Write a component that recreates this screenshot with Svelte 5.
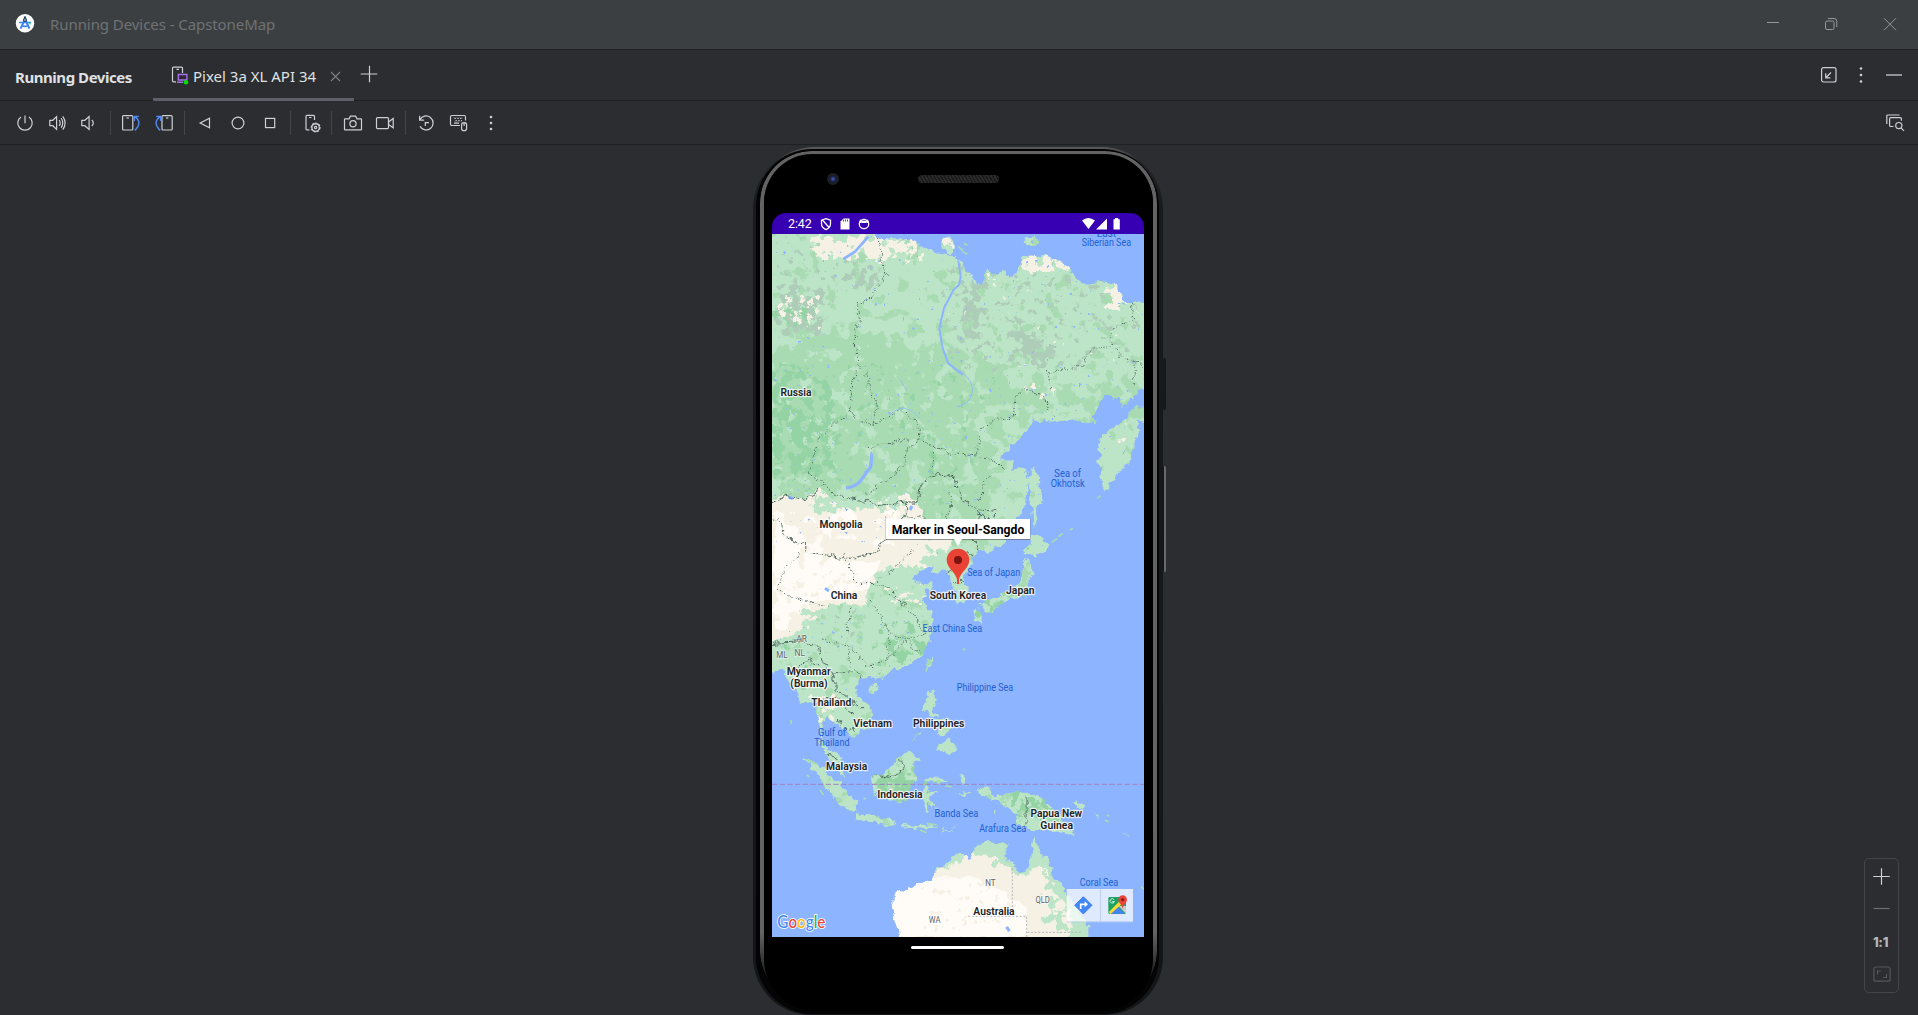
<script>
  const noise = [
    { id: 'mid', color: '#a9dbb3', freq: 0.024, seed: 3, blur: 34 },
    { id: 'deep', color: '#94d4a4', freq: 0.032, seed: 9, blur: 30 },
    { id: 'cream', color: '#f6f1e5', freq: 0.045, seed: 5, blur: 14 },
    { id: 'white', color: '#fffcf7', freq: 0.02, seed: 12, blur: 14 },
    { id: 'gray', color: '#aecdb8', freq: 0.04, seed: 21, blur: 16 },
    { id: 'pale', color: '#bce4c6', freq: 0.04, seed: 31, blur: 16 },
    { id: 'lake', color: '#8cb4ff', freq: 0.07, seed: 44, blur: 14 }
  ];

  // country labels: text, centre x, baseline y, width
  const countries = [
    ['Russia', 168, 768, 93], ['Mongolia', 303, 1164, 129], ['China', 312, 1377, 80],
    ['South Korea', 654, 1377, 169], ['Japan', 841, 1362, 86], ['Myanmar', 206, 1605, 132],
    ['(Burma)', 207, 1641, 112], ['Thailand', 274, 1699, 120], ['Vietnam', 398, 1760, 116],
    ['Philippines', 596, 1761, 154], ['Malaysia', 320, 1889, 124], ['Indonesia', 480, 1974, 136],
    ['Papua New', 949, 2031, 155], ['Guinea', 950, 2067, 98], ['Australia', 762, 2325, 124]
  ];
  const seas = [
    ['East', 1099, 291, 58], ['Siberian Sea', 1099, 319, 148], ['Sea of', 983, 1011, 80],
    ['Okhotsk', 983, 1041, 102], ['Sea of Japan', 761, 1307, 159], ['East China Sea', 637, 1476, 179],
    ['Philippine Sea', 735, 1653, 169], ['Gulf of', 276, 1787, 84], ['Thailand', 276, 1817, 106],
    ['Banda Sea', 649, 2030, 131], ['Arafura Sea', 788, 2076, 141], ['Coral Sea', 1077, 2237, 116]
  ];
  const regions = [
    ['AR', 185, 1506, 32], ['ML', 126, 1553, 34], ['NL', 179, 1547, 31],
    ['NT', 751, 2238, 31], ['QLD', 908, 2289, 43], ['WA', 584, 2348, 35]
  ];
</script>

<div class="window">
  <header class="titlebar">
    <svg class="logo" width="20" height="20" viewBox="0 0 20 20">
      <circle cx="10" cy="9.2" r="9.2" fill="#fff" />
      <path d="M10 2.400v2" stroke="#2b4a6b" stroke-width="2.200" />
      <path d="M10 5 L5.600 14.600 M10 5 L14.400 14.600" stroke="#3b82f6" stroke-width="2" fill="none" />
      <path d="M4 8.500h12M6.500 11.600 q3.500 1.600 7 0" stroke="#4285f4" stroke-width="1.600" fill="none" />
      <circle cx="10" cy="6" r="2" fill="#1f3b5c" /><circle cx="10" cy="6" r=".8" fill="#fff" />
      <path d="M13.500 8.600l2 1.600" stroke="#3ddc84" stroke-width="1.400" />
    </svg>
    <span class="title">Running Devices - CapstoneMap</span>
    <div class="wincontrols">
      <svg width="14" height="14" viewBox="0 0 14 14"><path d="M1 5.500h12" /></svg>
      <svg width="14" height="14" viewBox="0 0 14 14"><rect x=".5" y="4" width="8.500" height="8.500" rx="1.500" /><path d="M3 1.500h6a2.800 2.800 0 0 1 2.800 2.800V10" /></svg>
      <svg width="14" height="14" viewBox="0 0 14 14"><path d="M1 1.200l12 12M13 1.200l-12 12" /></svg>
    </div>
  </header>

  <nav class="tabs">
    <strong>Running Devices</strong>
    <div class="tab">
      <svg class="device" width="18" height="20" viewBox="0 0 18 20">
        <path d="M11.500 7V2.200a1 1 0 0 0-1-1H2.500a1 1 0 0 0-1 1v12.600a1 1 0 0 0 1 1H5M5.500 3.300h2.500" stroke="#ced0d6" fill="none" stroke-width="1.200" />
        <path d="M7.300 8.500h8.600v5.500H7.300zM6 16.300h6" stroke="#a571e6" fill="#2f2936" stroke-width="1.400" />
        <circle cx="15" cy="16.300" r="2.300" fill="#00e000" />
      </svg>
      <span>Pixel 3a XL API 34</span>
      <svg class="close" width="11" height="11" viewBox="0 0 11 11"><path d="M1 1l9 9M10 1l-9 9" stroke="#7d8085" stroke-width="1.100" /></svg>
    </div>
    <svg class="add" width="18" height="18" viewBox="0 0 18 18"><path d="M9.500 .7v16.600M.7 9h16.600" stroke="#ced0d6" stroke-width="1.200" /></svg>
    <div class="tabtools">
      <svg width="18" height="18" viewBox="0 0 18 18"><rect x="1.600" y="1.600" width="14.400" height="14.400" rx="2" /><path d="M11 6.500L6 11.500M5.700 7.300v4.600h4.600" /></svg>
      <svg width="4" height="18" viewBox="0 0 4 18" class="dots"><circle cx="2" cy="2.500" r="1.300" /><circle cx="2" cy="9" r="1.300" /><circle cx="2" cy="15.500" r="1.300" /></svg>
      <svg width="18" height="18" viewBox="0 0 18 18"><path d="M2 9h16" stroke-width="1.800" stroke="#9da0a5" /></svg>
    </div>
  </nav>

  <div class="toolbar">
    <svg width="18" height="18" viewBox="0 0 18 18"><path d="M9 1.500v7.800M5 3a7.200 7.200 0 1 0 8 0" /></svg>
    <svg class="g1" width="20" height="18" viewBox="0 0 20 18"><path d="M1.800 6.300h3L8.600 2.600v12.800L4.800 11.700h-3zM11.200 6q2 3 0 6M13.200 4.300q3 4.700 0 9.400M14.800 2.300q4.600 6.700 0 13.400" /></svg>
    <svg class="g2" width="16" height="18" viewBox="0 0 16 18"><path d="M1.800 6.300h3L9.100 2.600v12.800L4.800 11.700h-3zM11.800 6q3 3 0 6" /></svg>
    <i class="sep s1"></i>
    <svg class="g3" width="20" height="18" viewBox="0 0 20 18"><rect x="1.600" y="1.600" width="10.200" height="14.400" rx="1" /><path d="M5.500 4h2.400" /><path class="blue" d="M13.200 2.500h4.500M13.400 2v5M13.600 2.600q8.500 5.400 .2 14" /></svg>
    <svg class="g4" width="20" height="18" viewBox="0 0 20 18"><rect x="8" y="1.600" width="10.200" height="14.400" rx="1" /><path d="M12 4h2.400" /><path class="blue" d="M6.800 2.500H2.300M6.600 2v5M6.400 2.600q-8.500 5.400-.2 14" /></svg>
    <i class="sep s2"></i>
    <svg class="g5" width="14" height="18" viewBox="0 0 14 18"><path d="M11.500 4.300v9.400L2.200 9z" /></svg>
    <svg class="g6" width="16" height="18" viewBox="0 0 16 18"><circle cx="8" cy="9" r="5.900" /></svg>
    <svg class="g7" width="14" height="18" viewBox="0 0 14 18"><rect x="2.500" y="4.400" width="9.200" height="9.200" /></svg>
    <i class="sep s3"></i>
    <svg class="g8" width="18" height="20" viewBox="0 0 18 20"><path d="M10.500 7V3.300a1 1 0 0 0-1-1H3a1 1 0 0 0-1 1v12.600a1 1 0 0 0 1 1h2.500M5 4.500h2.500" /><circle cx="11.600" cy="14.500" r="4.400" stroke-dasharray="2.400 .9" /><circle cx="11.600" cy="14.500" r="3.700" /><circle cx="11.600" cy="14.500" r="1.200" /></svg>
    <i class="sep s4"></i>
    <svg class="g9" width="20" height="18" viewBox="0 0 20 18"><path d="M2 4.800h4L7.400 2.200h5.200L14 4.800h4q.5 0 .5.6v9.800q0 .6-.6.6H2.100q-.6 0-.6-.6V5.400q0-.6.5-.6z" /><circle cx="10" cy="9.800" r="3.100" /></svg>
    <svg class="g10" width="20" height="18" viewBox="0 0 20 18"><rect x="1.500" y="3.600" width="12" height="11" rx="1" /><path d="M13.500 8l4.700-3.600v9.400L13.500 10.400z" /></svg>
    <i class="sep s5"></i>
    <svg class="g11" width="18" height="18" viewBox="0 0 18 18"><path d="M2.600 1.700v4.400h4.600M2.800 5.900A7 7 0 1 1 3 12.400M8.300 12V8.600h3.700" /></svg>
    <svg class="g12" width="20" height="20" viewBox="0 0 20 20"><path d="M11 12.500H3a1.500 1.500 0 0 1-1.500-1.500V4A1.500 1.500 0 0 1 3 2.500h12A1.500 1.500 0 0 1 16.500 4v3.500M4 5.300h10M5 7.700h8M5 10.100h5" /><path d="M4 5.300h10.500M5 7.700h8" stroke-dasharray="1.500 1.300" stroke="#2b2d30" /><rect x="12.600" y="9.600" width="5" height="8" rx="2.200" fill="#2b2d30" /><path d="M15.100 9.600v3.400" /></svg>
    <svg class="g13 dots" width="4" height="18" viewBox="0 0 4 18"><circle cx="2" cy="3" r="1.300" /><circle cx="2" cy="9" r="1.300" /><circle cx="2" cy="15" r="1.300" /></svg>
    <svg class="g14" width="20" height="20" viewBox="0 0 20 20"><path d="M1.800 11V3a1 1 0 0 1 1-1H14.500M8.500 13.500H5.600a1 1 0 0 1-1-1V5.700a1 1 0 0 1 1-1h9.800a1 1 0 0 1 1 1v2" /><circle cx="13.800" cy="12.600" r="3.100" /><path d="M16 14.800l3 3" /></svg>
  </div>

  <main class="stage">
    <div class="phone">
      <i class="key power"></i>
      <i class="key volume"></i>
      <div class="rim"></div>
      <div class="bezel"></div>
      <div class="face">
        <div class="sensors"><i class="camera"></i><i class="speaker"></i></div>
        <div class="screen">
          <div class="status">
            <span>2:42</span>
            <svg width="83" height="14" viewBox="0 0 83 14">
              <path d="M6 1.600l4.500 1.600v3.600q0 4-4.500 5.800-4.500-1.800-4.500-5.800V3.200zM2.500 3l7 8" fill="none" stroke="#fff" stroke-width="1.300" />
              <path d="M23.500 1.500h6v11h-9V4.500z" fill="#fff" /><path d="M23.500 2.500v2M25.500 2.500v2M27.500 2.500v2" stroke="#3700b3" stroke-width=".8" />
              <circle cx="44" cy="7" r="4.700" fill="none" stroke="#fff" stroke-width="1.300" /><path d="M40 2.500q4 2.500 8 0l1 3.500h-10z" fill="#fff" /><path d="M41.500 6l1.500 1M46.500 6L45 7" stroke="#3700b3" />
            </svg>
            <svg class="signal" width="40" height="14" viewBox="0 0 40 14">
              <path d="M1 3.500q6-5 13 0L7.500 12zM15 12.500L26 1.500v11zM32.500 2.200h1.600V1h3v1.200h1.700v10.300H32.500z" fill="#fff" />
            </svg>
          </div>
          <svg class="map" width="372" height="703" viewBox="96 282 1116 2109">
            <defs>
              <filter id="rough" filterUnits="userSpaceOnUse" x="60" y="250" width="1190" height="2180">
                <feTurbulence type="fractalNoise" baseFrequency=".045" numOctaves="3" seed="4" />
                <feDisplacementMap in="SourceGraphic" scale="26" xChannelSelector="R" yChannelSelector="G" />
              </filter>
              {#each noise as n}
                <filter id={n.id} filterUnits="userSpaceOnUse" x="60" y="250" width="1190" height="2180" color-interpolation-filters="sRGB">
                  <feTurbulence type="fractalNoise" baseFrequency={n.freq} numOctaves="5" seed={n.seed} />
                  <feColorMatrix values="0 0 0 0 0  0 0 0 0 0  0 0 0 0 0  1 0 0 0 0" result="n" />
                  <feGaussianBlur in="SourceAlpha" stdDeviation={n.blur} result="b" />
                  <feComposite in="n" in2="b" operator="arithmetic" k2="1" k3=".7" k4="-.3" />
                  <feComponentTransfer result="t"><feFuncA type="linear" slope="18" intercept="-11.7" /></feComponentTransfer>
                  <feFlood flood-color={n.color} />
                  <feComposite operator="in" in2="t" />
                </filter>
              {/each}
              <g id="land">
                <path d="M60 250H400L410 290 460 298 520 298 540 318 600 338 640 350 655 362 690 400 715 437 728 430 738 385 755 405 790 397 815 410 830 405 845 350 870 343 920 350 960 365 985 380 1005 410 1030 432 1100 424 1130 440 1145 475 1165 492 1200 482 1250 484V740L1190 750 1180 775 1150 800 1140 775 1100 767 1085 780 1055 830 1068 845 1040 850 1000 838 950 845 885 842 860 870 830 905 780 960 815 958 815 990 850 980 865 1000 870 1020 858 1060 855 1100 835 1130 800 1190 780 1220 745 1235 720 1230 710 1240 690 1250 695 1275 672 1300 680 1350 685 1380 650 1395 650 1350 625 1330 637 1300 600 1292 575 1300 580 1275 545 1290 520 1315 530 1330 585 1335 560 1350 545 1375 565 1410 580 1430 578 1470 570 1500 545 1545 500 1580 455 1590 440 1605 405 1620 390 1610 360 1615 345 1640 355 1670 385 1695 395 1720 385 1760 355 1785 335 1800 325 1775 300 1755 285 1750 270 1735 255 1730 245 1760 245 1800 265 1830 290 1840 310 1870 320 1910 300 1900 270 1865 258 1840 240 1810 238 1750 230 1690 200 1685 180 1695 175 1660 150 1630 135 1600 120 1590 60 1605Z" />
                <path d="M605 295L625 290 645 318 632 345 608 325ZM850 305L880 285 897 318 870 318Z" />
                <path d="M1250 790L1180 805 1150 840 1120 860 1085 890 1077 940 1080 990 1092 1058 1110 1035 1140 990 1170 960 1175 930 1187 925 1180 905 1195 870 1190 840 1250 855Z" />
                <path d="M880 975L892 1000 897 1040 908 1090 887 1100 893 1150 878 1160 872 1090 867 1020ZM873 1180L926 1212 920 1235 885 1248 850 1238 868 1210ZM852 1250L872 1262 874 1300 862 1340 852 1370 800 1382 760 1412 718 1400 740 1380 780 1368 810 1350 837 1330 852 1290Z" />
                <path d="M700 1406L725 1410 720 1448 702 1440ZM738 1408L768 1400 750 1422ZM560 1560L580 1550 573 1585 560 1598ZM385 1640L403 1626 420 1635 405 1658 390 1656Z" />
                <path d="M562 1656L585 1658 583 1690 575 1715 605 1730 570 1727 552 1710ZM585 1745L625 1735 635 1770 600 1790ZM590 1820L630 1790 648 1815 632 1848 600 1832ZM516 1805L545 1770 540 1785Z" />
                <path d="M190 1850L232 1870 265 1905 302 1935 325 1965 348 1980 346 2012 318 2005 280 1970 250 1930ZM345 2020L400 2028 450 2035 475 2052 440 2056 345 2035ZM480 2054L535 2058 590 2056 560 2066 480 2062ZM606 2080L655 2058 615 2072Z" />
                <path d="M508 1830L540 1860 517 1870 532 1910 512 1945 500 1980 450 1985 400 1955 392 1905 422 1908 470 1862ZM550 1930L565 1915 630 1917 600 1930 565 1930 560 1950 590 1960 570 1970 590 2010 570 1990 560 2015 548 1975ZM665 1900L675 1900 675 1935 663 1930Z" />
                <path d="M708 1945L745 1938 760 1972 800 1960 835 1955 905 1972 932 2000 960 2030 1003 2087 940 2072 880 2070 840 2060 822 2020 790 1995 735 1970ZM995 1985L1035 1995 1020 2005ZM1065 2015L1080 2035 1070 2030ZM1150 2070L1170 2090 1160 2085ZM640 1955L700 1960 680 1965ZM762 2015L770 2010 765 2035Z" />
                <path d="M880 2092L897 2125 905 2145 922 2155 935 2205 965 2235 985 2270 1020 2310 1045 2355 1045 2420H480L470 2360 457 2320 458 2270 500 2245 575 2220 588 2185 610 2185 635 2150 665 2140 690 2160 710 2115 735 2105 800 2112 795 2150 820 2175 840 2195 865 2190 870 2160Z" />
              </g>
              <mask id="landmask" maskUnits="userSpaceOnUse" x="96" y="282" width="1116" height="2109">
                <use href="#land" fill="#fff" filter="url(#rough)" />
              </mask>
            </defs>
            <rect x="96" y="282" width="1116" height="2109" fill="#8cb4ff" />
            <g mask="url(#landmask)">
              <rect x="96" y="282" width="1116" height="2109" fill="#bce4c6" />
              <g filter="url(#mid)">
                <path d="M60 610L400 560 640 640 820 700 1000 740 1250 700V850H850L700 1250H60Z" fill-opacity=".82" />
                <path d="M60 250H1250V720H60ZM60 1300H600V2420H60ZM600 1700H1250V2100H600ZM1060 800H1250V1100H1060ZM700 1000H940V1460H700Z" fill-opacity=".48" />
              </g>
              <g filter="url(#deep)">
                <path d="M60 680L200 640 280 720 300 900 330 1000 240 1040H60Z" fill-opacity=".72" />
                <path d="M300 640H840L700 1200H560L450 900H300ZM96 1500H240V1700H96Z" fill-opacity=".38" />
                <path d="M780 1950H960V2060H780ZM90 480H240V580H90ZM380 1880H580V2020H380Z" fill-opacity=".8" />
                <path d="M680 1340H900V1480H680ZM850 1180H930V1330H850ZM380 1450H580V1600H380Z" fill-opacity=".65" />
              </g>
              <g filter="url(#gray)">
                <path d="M330 370H430V460H330ZM665 420H715V610H665ZM820 520L870 580 960 640 900 690 830 640ZM96 450H260V600H96Z" fill-opacity=".72" />
                <path d="M600 330H1212V700H600ZM280 1380H380V1500H280ZM96 290H340V480H96Z" fill-opacity=".45" />
              </g>
              <path d="M60 1085L130 1065 190 1080 240 1045 280 1080 400 1095 440 1075 500 1060 550 1105 545 1150 500 1180 560 1200 640 1190 620 1240 560 1270 490 1300 420 1290 380 1350 380 1395 270 1390 240 1425 150 1490 60 1510Z" fill="#f6f1e5" filter="url(#rough)" />
              <g filter="url(#white)">
                <path d="M96 1160L200 1240 400 1270 440 1220 400 1350 220 1390 120 1480H96Z" />
                <path d="M96 1100H480V1230H96Z" fill-opacity=".6" />
              </g>
              <g filter="url(#cream)">
                <path d="M210 282H430V365H210ZM400 295H540V335H400ZM600 282H650V330H600ZM840 340H990V395H840ZM1110 430H1160V520H1110ZM725 400H760V435H725Z" fill-opacity=".88" />
                <path d="M110 460H250V570H110ZM400 330H560V370H400ZM480 1200H640V1300H480ZM420 1330H560V1400H420ZM200 1650H320V1760H200Z" fill-opacity=".6" />
                <path d="M1120 850H1170V930H1120ZM850 710H950V790H850ZM180 1430H230V1500H180ZM96 1290H380V1400H96Z" fill-opacity=".5" />
                <path d="M600 400H1212V700H600Z" fill-opacity=".24" />
              </g>
              <g filter="url(#pale)"><path d="M190 1060H500V1125H190ZM400 1270H530V1370H400ZM170 1400H260V1470H170ZM540 1215H650V1300H540Z" fill-opacity=".85" /></g>
              <path d="M470 2420L440 2300 450 2240 600 2190 680 2150 730 2140 780 2160 830 2205 870 2200 900 2175 930 2210 945 2260 985 2300 1000 2345 970 2420Z" fill="#f6f1e5" filter="url(#rough)" />
              <path d="M440 2391L440 2250 600 2210 700 2210 760 2240 860 2300 860 2391Z" fill="#fffcf7" filter="url(#rough)" />
              <g filter="url(#cream)"><path d="M540 2200H850V2391H540Z" fill-opacity=".45" /></g>
              <g filter="url(#pale)"><path d="M900 2140H1010V2391H900ZM740 2150H800V2200H740Z" fill-opacity=".65" /></g>
              <g filter="url(#lake)"><path d="M96 282H1212V1250H96ZM96 1400H600V1700H96Z" fill-opacity=".25" /></g>
              <g class="lakes">
                <path d="M655 362L662 410 657 435 640 450 612 505 598 565 608 625 625 670 668 704" stroke-width="6" />
                <path d="M658 690Q705 725 696 760T650 800" stroke-width="2.500" />
                <path d="M318 1044Q350 1040 365 1018T392 980L396 940" stroke-width="10" />
                <path d="M310 357L345 335 385 290" stroke-width="8" />
                <path d="M450 825Q490 780 540 835M480 720L500 750" stroke-width="2" />
                <path d="M145 1070l14 6M510 1110l6-12M255 1345l12 8M800 2360l8 14" stroke-width="9" />
              </g>
              <g class="borders" filter="url(#rough)">
                <path d="M410 282L425 330 422 370 443 405 430 425 405 450 395 475 350 492 358 540 345 600 350 650 358 680 335 740 330 810 345 840 400 850 412 800 385 740 380 690" />
                <path d="M400 850L440 840 480 805 530 845 540 900 500 930 490 980 445 1020 380 1060M540 900L620 935 710 945 725 860 770 840 820 830 825 770 860 745 920 780 940 830" />
                <path d="M930 700L960 690 1030 680 1035 650 1060 625 1110 620 1120 560 1180 540 1178 490M1120 620L1150 655 1212 672M1185 670L1180 730M930 760L925 690" />
                <path d="M330 810L240 890 205 990 220 1015 250 1025M390 920L480 905 510 900M580 1000L580 930M715 950L770 965 790 985M720 1080L735 1020 760 1005M630 1060L635 1100 600 1170M490 1130L560 1135 600 1170" />
                <path d="M180 1240L130 1290 115 1350 150 1370 270 1400M310 1240L350 1330 400 1330 480 1270 520 1230M390 1380L450 1480 440 1560M330 1400L320 1500 330 1580M450 1360L500 1400 560 1480 500 1500 440 1480M390 1330L460 1350 490 1400M250 1500L330 1520 380 1580 440 1560 500 1500 540 1540" />
              </g>
              <path class="states" d="M817 2185V2310M685 2329H860V2391M862 2377H1025" />
              <g class="nations" filter="url(#rough)">
                <path d="M96 1085L140 1065 190 1082 225 1065 245 1030 290 1068 370 1082 430 1100 480 1088 530 1085 545 1030 590 1000 640 1010 665 1080 710 1105 765 1115 760 1140 710 1125" />
                <path d="M96 1130L125 1150 130 1190 190 1210 205 1235 330 1258 410 1235 440 1190 490 1130 505 1085M715 1105L720 1130 700 1200 720 1230M700 1240L650 1250 620 1310M640 1325L680 1325" />
                <path d="M96 1510L190 1505 235 1520 245 1560 275 1600 285 1640 330 1680 370 1710M240 1580L205 1560 150 1600M275 1600L350 1590 370 1620M230 1690L290 1670 340 1730M295 1740L310 1770 340 1765M400 1905L450 1912 490 1890 485 1860M858 1970V2060M260 1840L290 1855" />
              </g>
            </g>
            <g class="specks">
              <path d="M935 1207l16-12M955 1190l14-10M990 1170l8-6M1072 1075l10-8M668 1528l8 0M152 1740l2 12M560 2050l30 5M540 2070l20 8M1100 2025l8 4M1095 2040l10 6M200 1905l8 6M240 1950l10 14M370 1975l8 2M615 1938l20 2M655 1330l8 0M655 320l14 12M668 335l14 8M672 310l10 6M1203 2240l9 8" />
            </g>
            <path d="M96 1933H1212" stroke="#a184bd" stroke-width="3" stroke-dasharray="16 7" />
            <g class="sea">{#each seas as [t, x, y, w]}<text {x} {y} textLength={w} lengthAdjust="spacingAndGlyphs">{t}</text>{/each}</g>
            <g class="region">{#each regions as [t, x, y, w]}<text {x} {y} textLength={w} lengthAdjust="spacingAndGlyphs">{t}</text>{/each}</g>
            <g class="country">{#each countries as [t, x, y, w]}<text {x} {y} textLength={w} lengthAdjust="spacingAndGlyphs">{t}</text>{/each}</g>

            <g class="callout">
              <path d="M437 1139H871V1200H437Z" fill="#555" opacity=".6" />
              <path d="M438 1137H870V1197H666L654 1218 642 1197H438Z" fill="#fff" />
              <text x="654" y="1181" textLength="398" lengthAdjust="spacingAndGlyphs">Marker in Seoul-Sangdo</text>
            </g>
            <path d="M651 1332V1318C646 1296 620 1284 620 1260A34 34 0 0 1 688 1260C688 1284 662 1296 657 1318V1332Z" fill="#ea4335" />
            <circle cx="654" cy="1260" r="12" fill="#7b1410" />

            <g class="google">
              <text x="112" y="2363" textLength="144" lengthAdjust="spacingAndGlyphs"><tspan fill="#4285f4">G</tspan><tspan fill="#ea4335">o</tspan><tspan fill="#fbbc04">o</tspan><tspan fill="#4285f4">g</tspan><tspan fill="#34a853">l</tspan><tspan fill="#ea4335">e</tspan></text>
            </g>
            <rect x="980" y="2247" width="199" height="98" fill="#fff" fill-opacity=".72" />
            <path d="M1081.500 2247V2345M980 2346H1179" stroke="#b9c9e6" stroke-width="2.500" />
            <path d="M1030 2270L1056 2296 1030 2322 1004 2296Z" fill="#4285f4" stroke="#4285f4" stroke-width="3" stroke-linejoin="round" />
            <path d="M1022 2307V2293H1036" fill="none" stroke="#fff" stroke-width="5" /><path d="M1034 2284L1044 2293 1034 2302Z" fill="#fff" />
            <rect x="1105" y="2271" width="53" height="51" rx="4" fill="#1ea362" />
            <path d="M1158 2298V2322L1136 2298Z" fill="#c9ccd0" /><path d="M1106 2321L1131 2297 1154 2322Z" fill="#4285f4" />
            <path d="M1106 2317L1148 2274 1156 2282 1112 2322Z" fill="#fdd835" />
            <path d="M1122 2279a6.500 6.500 0 1 0 1 5.500h-6" fill="none" stroke="#fff" stroke-width="2.500" />
            <path d="M1148 2308C1147 2292 1135 2290 1135 2279A13 13 0 0 1 1161 2279C1161 2290 1149 2292 1148 2308Z" fill="#e8453c" /><circle cx="1148" cy="2279" r="5" fill="#8c1f18" />
          </svg>
          <div class="navbar"><i></i></div>
        </div>
      </div>
    </div>

    <div class="zoombox">
      <svg width="18" height="18" viewBox="0 0 18 18"><path d="M8.500 .2v16.600M.2 8.500h16.600" stroke="#ced0d6" stroke-width="1.200" /></svg>
      <svg width="18" height="18" viewBox="0 0 18 18"><path d="M.5 7.500h16" stroke="#6c6e72" stroke-width="1.200" /></svg>
      <b>1:1</b>
      <svg width="18" height="18" viewBox="0 0 18 18"><rect x=".9" y="1" width="16.200" height="14.200" rx="2" stroke="#55575b" stroke-width="1.200" fill="none" /><path d="M4.500 8.500V5H8M13.500 8v3.500H10" stroke="#55575b" stroke-width="1.200" fill="none" /></svg>
    </div>
  </main>
</div>

<style>
  :global(body) { margin: 0; background: #2b2d30; overflow: hidden; }
  .window { width: 1918px; height: 1015px; display: flex; flex-direction: column; background: #2b2d30; color: #dfe1e5; font-family: "Noto Sans", "Open Sans", sans-serif; overflow: hidden; }
  svg { display: block; flex: none; }
  .titlebar { box-sizing: border-box; height: 50px; flex: none; display: flex; align-items: center; padding: 0 12px 2px 15px; background: #3c3f41; border-bottom: 1px solid #1e1f22; }
  .title { margin-left: 15px; padding-top: 1px; font-size: 15px; color: #6f7275; letter-spacing: -.07px; }
  .wincontrols { margin-left: auto; display: flex; gap: 44.500px; padding-right: 9px; }
  .wincontrols svg { fill: none; stroke: #95979a; stroke-width: 1; }
  .tabs { box-sizing: border-box; height: 51px; flex: none; display: flex; align-items: center; padding: 0 16px 0 15px; border-bottom: 1px solid #1e1f22; }
  .tabs strong { width: 138px; padding-top: 4px; font-size: 15px; letter-spacing: -.45px; white-space: nowrap; }
  .tab { box-sizing: border-box; width: 201px; height: 51px; display: flex; align-items: center; padding: 2px 0 0 18px; border-bottom: 3px solid #5f606a; border-radius: 1px; font-size: 15px; white-space: nowrap; }
  .tab span { width: 123px; margin-left: 4px; padding-top: 3px; }
  .device { margin-top: 2px; }
  .close { margin: 3px 0 0 14px; }
  .add { margin: 0 0 2px 6px; }
  .tabtools { margin-left: auto; display: flex; gap: 21px; padding-right: 0; }
  .tabtools svg, .toolbar svg { fill: none; stroke: #ced0d6; stroke-width: 1.200; }
  .tabtools .dots, .toolbar .dots { fill: #ced0d6; stroke: none; }
  .toolbar { box-sizing: border-box; height: 44px; flex: none; display: flex; align-items: center; padding: 1px 13px 0 16px; border-bottom: 1px solid #1e1f22; }
  .sep { width: 1px; height: 24px; background: #43454a; flex: none; }
  .toolbar .blue { stroke: #548af7; stroke-width: 1.400; }
  .g1 { margin-left: 14px; } .g2 { margin-left: 12px; }
  .s1 { margin-left: 14px; } .g3 { margin-left: 10px; } .g4 { margin-left: 13px; }
  .s2 { margin-left: 10px; } .g5 { margin-left: 13px; } .g6 { margin-left: 18px; } .g7 { margin-left: 17px; }
  .s3 { margin-left: 13px; } .g8 { margin-left: 13px; } .s4 { margin-left: 9px; } .g9 { margin-left: 11px; }
  .g10 { margin-left: 12px; } .s5 { margin-left: 10px; } .g11 { margin-left: 11px; } .g12 { margin-left: 14px; }
  .g13 { margin-left: 20px; } .g14 { margin-left: auto; }
  .stage { position: relative; flex: 1; display: flex; justify-content: center; padding-top: 2px; border-bottom: 4px solid #2a2329; box-sizing: border-box; }
  .phone { position: relative; width: 410px; height: 868px; box-sizing: border-box; border-radius: 62px 62px 58px 58px; margin-right: 2px; background: linear-gradient(#5c5c5c, #242526 14px, #191a1b 60px, #141516); }
  .rim { position: absolute; inset: 2px 4px 1px 3px; border-radius: 57px; background: #040404; }
  .bezel { position: absolute; inset: 4px 6px 12px 7px; border-radius: 52px; border: 4px solid #636363; border-top-width: 3px; border-bottom-color: transparent; box-sizing: border-box; mask-image: linear-gradient(#000 calc(100% - 70px), transparent calc(100% - 12px)); }
  .face { position: absolute; inset: 8px 10px 4px 11px; border-radius: 48px 48px 52px 52px; background: #000; }
  .sensors { height: 58px; display: flex; align-items: center; padding: 0 0 11px 63px; box-sizing: border-box; }
  .camera { width: 12px; height: 12px; border-radius: 50%; background: radial-gradient(#38509c 12%, #16204a 30%, #1d1e22 50%); }
  .speaker { width: 81px; height: 8px; margin-left: 79px; border-radius: 4px; background: repeating-linear-gradient(60deg, #2b2b2b 0 1.500px, #1b1b1b 1.500px 3px); }
  .screen { width: 372px; margin-left: 8px; border-radius: 14px 14px 0 0; overflow: hidden; }
  .face .screen { margin-left: 8px; }
  .status { height: 21px; box-sizing: border-box; display: flex; align-items: center; padding: 0 23px 0 16px; background: #3700b3; color: #fff; font: 12.500px Roboto, sans-serif; }
  .status span { width: 24px; margin-right: 8px; letter-spacing: -.1px; }
  .signal { margin-left: auto; }
  .navbar { height: 21px; display: flex; justify-content: center; align-items: center; }
  .navbar i { width: 93px; height: 3px; margin-right: 1px; border-radius: 2px; background: #fff; }
  .key { position: absolute; right: -3px; width: 3px; background: #17181a; border-radius: 2px; }
  .power { top: 211px; height: 52px; }
  .volume { top: 319px; height: 106px; background: linear-gradient(90deg, #151515 1px, #6a6a6a 1px); }
  .zoombox { position: absolute; right: 19px; top: 713px; width: 33px; height: 116px; border: 1px solid #43454a; border-radius: 5px; display: flex; flex-direction: column; align-items: center; justify-content: space-between; padding: 9px 0 8px; }
  .zoombox b { font: 800 13px/18px Inter, sans-serif; color: #b4b8bf; letter-spacing: -.3px; margin-right: 2px; }
  .map text { font-family: Roboto, sans-serif; text-anchor: middle; paint-order: stroke; }
  .country text { font-size: 34px; font-weight: 600; fill: #202124; stroke: #fff; stroke-opacity: .8; stroke-width: 7px; stroke-linejoin: round; }
  .sea text { font-size: 32px; fill: #2360cf; }
  .region text { font-size: 27px; fill: #5c6266; stroke: #fff; stroke-opacity: .6; stroke-width: 4px; }
  .callout text { font-size: 36px; font-weight: 700; fill: #000; }
  .google text { font-size: 50px; font-weight: 500; text-anchor: start; stroke: #fff; stroke-width: 5px; font-family: Lato, sans-serif; }
  .lakes { fill: none; stroke: #8cb4ff; }
  .borders { fill: none; stroke: #48665c; stroke-width: 3; stroke-dasharray: 4 5; }
  .states { fill: none; stroke: #b3b5b7; stroke-width: 3; stroke-dasharray: 6 5; }
  .nations { fill: none; stroke: #506a62; stroke-width: 3; stroke-dasharray: 14 2; }
  .specks { fill: none; stroke: #a9dbb3; stroke-width: 5; }
</style>
